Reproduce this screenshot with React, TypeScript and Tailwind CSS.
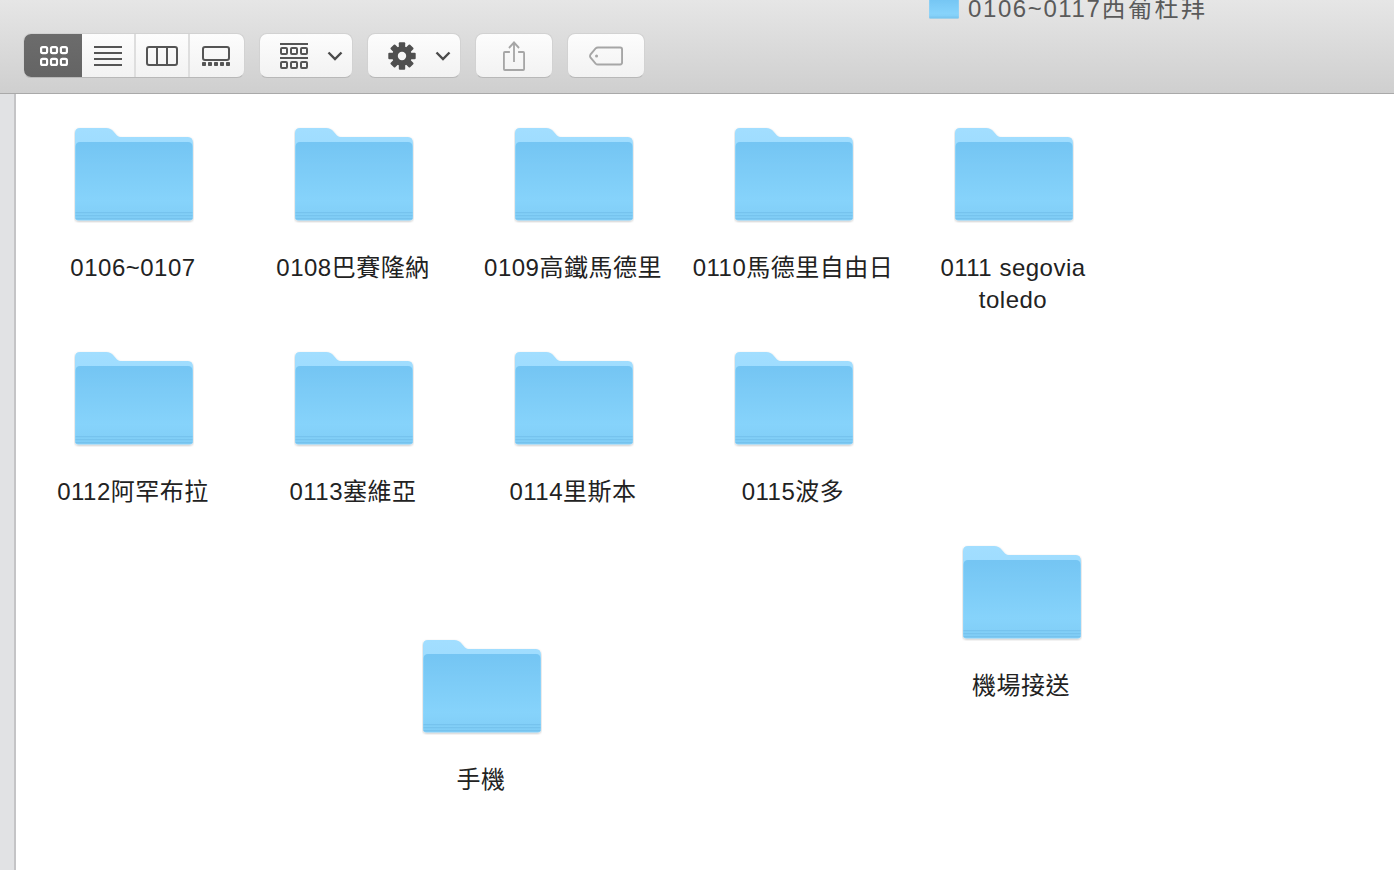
const Folder = ({ small = false }: { small?: boolean }) => (
  <svg viewBox="0 0 120 96" className={small ? "block w-[30px] h-[24px]" : "block w-[120px] h-[96px]"}>
    <defs>
      <linearGradient id="folderBack" x1="0" y1="0" x2="0" y2="1">
        <stop offset="0" stopColor="#a2deff" />
        <stop offset="1" stopColor="#92d6fb" />
      </linearGradient>
      <linearGradient id="folderFront" x1="0" y1="0" x2="0" y2="1">
        <stop offset="0" stopColor="#74c5f3" />
        <stop offset="0.75" stopColor="#86d3fb" />
        <stop offset="1" stopColor="#80cdf6" />
      </linearGradient>
      <filter id="folderShadow" x="-5%" y="-5%" width="110%" height="115%">
        <feDropShadow dx="0" dy="1" stdDeviation="0.900" floodColor="#000" floodOpacity="0.25" />
      </filter>
    </defs>
    <g filter="url(#folderShadow)">
      <path d="M1 6 Q1 1 6 1 H32 Q37 1 39.500 4.500 L43 8.500 Q45 10 47 10 H114 Q119 10 119 16 V90 Q119 93.500 115.500 93.500 H4.500 Q1 93.500 1 90 Z" fill="url(#folderBack)" />
      <path d="M1.500 20 Q1.500 15 6 15 H114 Q118.500 15 118.500 20 V90 Q118.500 93 115.500 93 H4.500 Q1.500 93 1.500 90 Z" fill="url(#folderFront)" />
    </g>
    <rect x="1.500" y="85" width="117" height="1.200" fill="#6db9e6" opacity="0.55" />
    <rect x="1.500" y="88" width="117" height="1.200" fill="#6db9e6" opacity="0.55" />
    <rect x="1.500" y="91" width="117" height="1.200" fill="#6db9e6" opacity="0.55" />
  </svg>
);

const Item = ({ label }: { label: string }) => (
  <div className="flex flex-col items-center w-[220px] pt-[33px]">
    <div className="ml-[2px]">
      <Folder />
    </div>
    <div className="mt-[29px] w-[204px] text-center text-[24px] leading-[32px] text-[#222222] tracking-[0.5px] font-['Liberation_Sans','Noto_Sans_CJK_TC',sans-serif]">
      {label}
    </div>
  </div>
);

const Chevron = () => (
  <svg viewBox="0 0 16 10" className="w-[16px] h-[10px] shrink-0" fill="none" stroke="#4b4b4b" strokeWidth="2.400">
    <path d="M1.500 1.500 L8 8 L14.500 1.500" />
  </svg>
);

const GridIcon = ({ color }: { color: string }) => (
  <svg viewBox="0 0 28 20" className="w-[28px] h-[20px]" fill="none" stroke={color} strokeWidth="2.200">
    {[1.100, 11, 20.900].map((x) => (
      <g key={x}>
        <rect x={x} y="1.100" width="6" height="6" rx="1.500" />
        <rect x={x} y="12.900" width="6" height="6" rx="1.500" />
      </g>
    ))}
  </svg>
);

const ListIcon = () => (
  <svg viewBox="0 0 28 20" className="w-[28px] h-[20px]" stroke="#555555" strokeWidth="2">
    {[1, 7, 13, 19].map((y) => (
      <path key={y} d={`M0 ${y} H28`} />
    ))}
  </svg>
);

const ColumnIcon = () => (
  <svg viewBox="0 0 32 20" className="w-[32px] h-[20px]" fill="none" stroke="#555555" strokeWidth="2">
    <rect x="1" y="1" width="30" height="18" rx="2" />
    <path d="M11 1 V19 M21 1 V19" />
  </svg>
);

const GalleryIcon = () => (
  <svg viewBox="0 0 28 20" className="w-[28px] h-[20px]">
    <rect x="1" y="1" width="26" height="13" rx="2" fill="none" stroke="#555555" strokeWidth="2" />
    {[0, 6, 12, 18, 24].map((x) => (
      <rect key={x} x={x} y="16" width="4" height="4" rx="0.800" fill="#555555" />
    ))}
  </svg>
);

const ArrangeIcon = () => (
  <svg viewBox="0 0 28 26" className="w-[28px] h-[26px] shrink-0" fill="none" stroke="#555555" strokeWidth="2">
    <path d="M0 1 H28 M0 15 H28" />
    {[1, 11, 21].map((x) => (
      <g key={x}>
        <rect x={x} y="5" width="6" height="6" rx="1" />
        <rect x={x} y="19" width="6" height="6" rx="1" />
      </g>
    ))}
  </svg>
);

const GearIcon = () => (
  <svg viewBox="0 0 28 28" className="w-[28px] h-[28px] shrink-0">
    {[0, 45, 90, 135].map((a) => (
      <rect key={a} x="10.800" y="0.300" width="6.400" height="27.400" rx="1" fill="#4f4f4f" transform={`rotate(${a} 14 14)`} />
    ))}
    <circle cx="14" cy="14" r="9.800" fill="#4f4f4f" />
    <circle cx="14" cy="14" r="4.200" fill="#f6f6f6" />
  </svg>
);

const ShareIcon = () => (
  <svg viewBox="0 0 24 30" className="w-[22px] h-[30px]" fill="none" stroke="#a6a6a6" strokeWidth="2" preserveAspectRatio="none">
    <path d="M7.500 11 H2 Q1 11 1 12 V28 Q1 29 2 29 H22 Q23 29 23 28 V12 Q23 11 22 11 H16.500" />
    <path d="M12 21 V1.500 M6.500 7 L12 1.500 L17.500 7" />
  </svg>
);

const TagIcon = () => (
  <svg viewBox="0 0 36 20" className="w-[34px] h-[20px]" fill="none" stroke="#a6a6a6" strokeWidth="2">
    <path d="M9.500 1 H33 Q35 1 35 3 V17 Q35 19 33 19 H9.500 Q8 19 7 18 L1.500 11.500 Q0.700 10 1.500 8.500 L7 2 Q8 1 9.500 1 Z" />
    <circle cx="8" cy="10" r="1.600" fill="#a6a6a6" stroke="none" />
  </svg>
);

const btn =
  "h-[45px] flex items-center bg-gradient-to-b from-[#fdfdfd] to-[#f2f2f2] border border-[#d2d2d2] border-b-[#b8b8b8] rounded-[8px]";

const row1 = ["0106~0107", "0108巴賽隆納", "0109高鐵馬德里", "0110馬德里自由日", "0111 segovia toledo"];
const row2 = ["0112阿罕布拉", "0113塞維亞", "0114里斯本", "0115波多"];

export default function App() {
  return (
    <div className="w-[1394px] h-[870px] overflow-hidden flex flex-col bg-white">
      <header className="relative h-[94px] shrink-0 bg-gradient-to-b from-[#e6e6e6] to-[#cfcfcf] border-b border-b-[#a9a9a9] flex items-start pt-[33px] pl-[23px] gap-[14px]">
        <div className="absolute left-[929px] -top-[5px] flex items-start gap-[9px]">
          <Folder small />
          <span className="text-[24px] leading-[28px] text-[#5a5a5a] tracking-[1.6px] whitespace-nowrap font-['Liberation_Sans','Noto_Sans_CJK_TC',sans-serif]">
            0106~0117<span className="tracking-[2.5px]">西葡杜拜</span>
          </span>
        </div>

        <div className="flex h-[45px] w-[222px] rounded-[8px] overflow-hidden border border-[#d2d2d2] border-b-[#b8b8b8] bg-gradient-to-b from-[#fdfdfd] to-[#f2f2f2]">
          <div className="w-[59px] shrink-0 -ml-px -my-px h-[45px] pl-[3px] bg-gradient-to-b from-[#6c6c6c] to-[#646464] flex items-center justify-center">
            <GridIcon color="#ffffff" />
          </div>
          <div className="w-[54px] shrink-0 flex items-center justify-center border-r-2 border-r-[#dedede]">
            <ListIcon />
          </div>
          <div className="w-[54px] shrink-0 flex items-center justify-center border-r-2 border-r-[#dedede]">
            <ColumnIcon />
          </div>
          <div className="flex-1 flex items-center justify-center pr-[2px]">
            <GalleryIcon />
          </div>
        </div>

        <div className={`${btn} w-[94px] gap-[19px] pl-[20px]`}>
          <ArrangeIcon />
          <Chevron />
        </div>
        <div className={`${btn} w-[94px] gap-[19px] pl-[20px]`}>
          <GearIcon />
          <Chevron />
        </div>
        <div className={`${btn} w-[78px] justify-center`}>
          <ShareIcon />
        </div>
        <div className={`${btn} w-[78px] justify-center`}>
          <TagIcon />
        </div>
      </header>

      <div className="flex flex-1 min-h-0">
        <aside className="w-[16px] shrink-0 bg-[#e1e2e4] border-r-2 border-r-[#c4c4c6]" />
        <main className="relative flex-1 pl-[7px]">
          <div className="grid grid-cols-[repeat(5,220px)] auto-rows-[224px]">
            {row1.map((l) => (
              <Item key={l} label={l} />
            ))}
            {row2.map((l) => (
              <Item key={l} label={l} />
            ))}
          </div>
          <div className="absolute left-[895px] top-[418px]">
            <Item label="機場接送" />
          </div>
          <div className="absolute left-[355px] top-[512px]">
            <Item label="手機" />
          </div>
        </main>
      </div>
    </div>
  );
}
